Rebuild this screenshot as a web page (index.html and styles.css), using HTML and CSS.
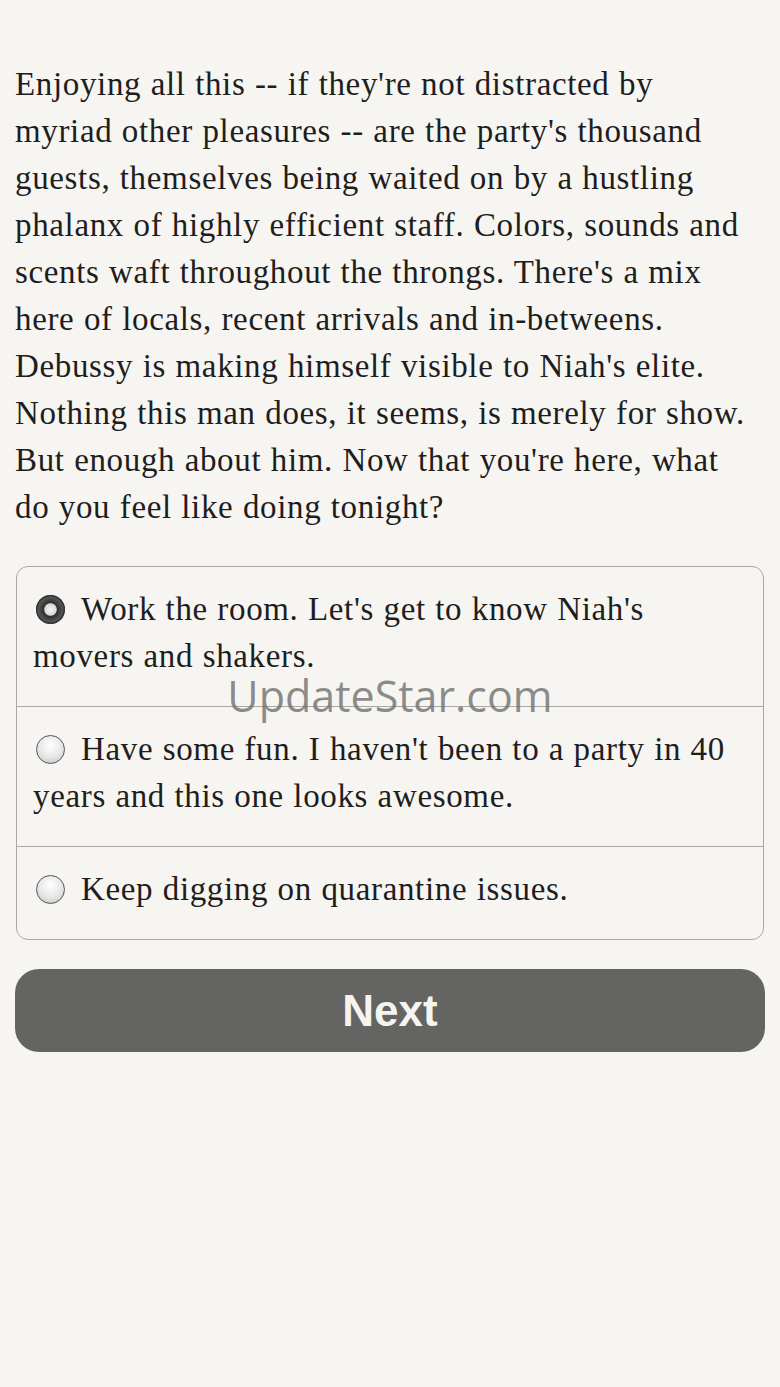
FILE: index.html
```html
<!DOCTYPE html>
<html>
<head>
<meta charset="utf-8">
<link rel="stylesheet" href="styles.css">
</head>
<body>
<main class="page">
  <p class="story">Enjoying all this -- if they're not distracted by myriad other pleasures -- are the party's thousand guests, themselves being waited on by a hustling phalanx of highly efficient staff. Colors, sounds and scents waft throughout the throngs. There's a mix here of locals, recent arrivals and in-betweens. Debussy is making himself visible to Niah's elite. Nothing this man does, it seems, is merely for show. But enough about him. Now that you're here, what do you feel like doing tonight?</p>
  <div class="choices">
    <label class="choice"><span class="radio checked"></span>Work the room. Let's get to know Niah's movers and shakers.</label>
    <label class="choice"><span class="radio"></span>Have some fun. I haven't been to a party in 40 years and this one looks awesome.</label>
    <label class="choice"><span class="radio"></span>Keep digging on quarantine issues.</label>
    <div class="watermark">UpdateStar.com</div>
  </div>
  <button class="next">Next</button>
</main>
</body>
</html>
```
FILE: styles.css
```css
html, body {
  margin: 0;
  padding: 0;
  background: #f7f5f1;
}
.page {
  padding: 61px 15px 0 15px;
  font-family: "Liberation Serif", "Times New Roman", serif;
  color: #1e1e1e;
}
.story {
  margin: 0 8px 0 0;
  font-size: 33px;
  line-height: 47px;
  letter-spacing: 0.65px;
  word-spacing: 0.6px;
}
.choices {
  position: relative;
  margin: 35px 1px 0 1px;
  border: 1.5px solid #a9a8a5;
  border-radius: 12px;
}
.choice {
  display: block;
  padding: 19px 16px 26px 16px;
  font-size: 33px;
  line-height: 47px;
  letter-spacing: 0.65px;
  word-spacing: 0.6px;
}
.choice + .choice {
  border-top: 1.5px solid #a9a8a5;
}
.radio {
  display: inline-block;
  width: 29px;
  height: 29px;
  border-radius: 50%;
  border: 1.5px solid #555;
  background: radial-gradient(circle at 50% 35%, #ffffff 0%, #e6e6e6 55%, #bdbdbd 100%);
  vertical-align: -4px;
  margin: 0 16px 0 3px;
  box-sizing: border-box;
}
.radio.checked {
  border: none;
  background: radial-gradient(circle at 50% 50%, #f4f4f4 0%, #d8d8d8 28%, #2f2f2f 33%, #555 60%, #888 100%);
  box-shadow: inset 0 0 0 1.5px #333;
}
.watermark {
  position: absolute;
  left: 0;
  right: 0;
  top: 99px;
  text-align: center;
  font-family: "Open Sans", "DejaVu Sans", sans-serif;
  font-size: 43px;
  color: rgba(110, 110, 110, 0.8);
  pointer-events: none;
}
.next {
  display: block;
  width: 100%;
  height: 83px;
  margin-top: 29px;
  border: none;
  border-radius: 24px;
  background: #646462;
  color: #f6f4f0;
  font-family: "Liberation Sans", Arial, sans-serif;
  font-weight: bold;
  font-size: 44px;
}
```
